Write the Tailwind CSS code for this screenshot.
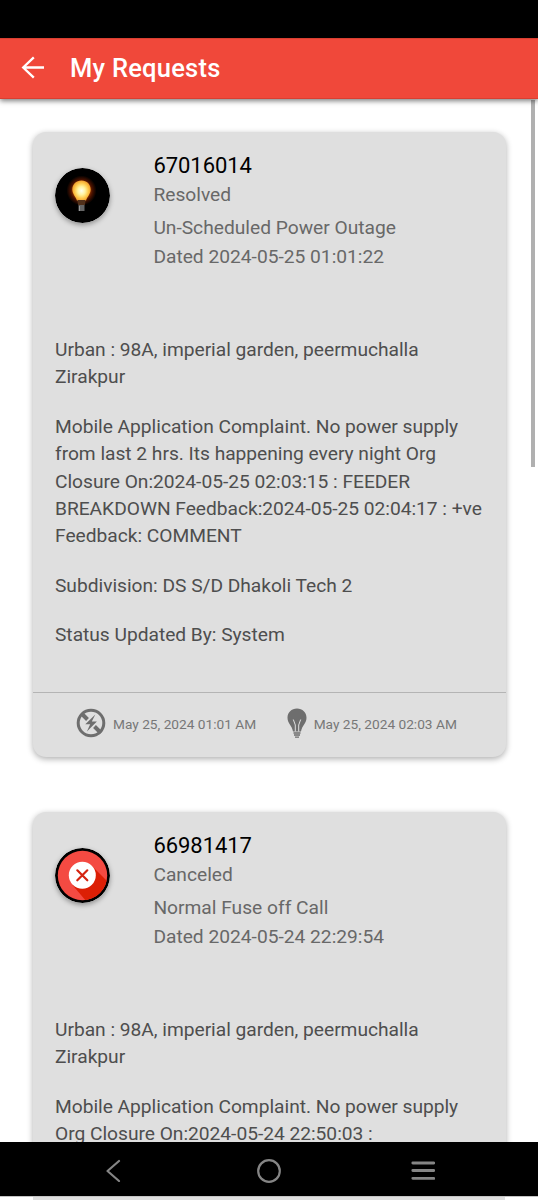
<!DOCTYPE html>
<html lang="en">
<head>
<meta charset="utf-8">
<title>My Requests</title>
<script src="https://cdn.jsdelivr.net/npm/@tailwindcss/browser@4"></script>
</head>
<body class="bg-white">
<div class="relative flex h-[1200px] w-[538px] flex-col overflow-hidden bg-white font-['Roboto','Liberation_Sans',sans-serif]">
  <div class="h-[38px] shrink-0 bg-black"></div>
  <header class="relative z-10 flex h-[61px] shrink-0 items-center border-y border-[#d93f31] bg-[#f0483a] pl-[21px] text-white shadow-[0_2px_5px_rgba(0,0,0,0.5)]">
    <svg class="mb-[2px] h-6 w-6 shrink-0" viewBox="0 0 24 24" fill="none" stroke="currentColor" stroke-width="2.3"><path d="M23 11.500H2.500M12.800 1.300L2.200 11.500l10.600 10.200"/></svg>
    <h1 class="ml-[25px] text-[25.5px] leading-none font-medium tracking-[0.25px]">My Requests</h1>
  </header>

  <main class="flex min-h-0 flex-1 flex-col gap-[54px] overflow-hidden px-8 pt-[33px] text-[19.2px] leading-[27.4px] text-[#4e4e4e]">
    <article class="ml-px flex h-[625px] mb-px w-[473px] shrink-0 flex-col rounded-[13px] bg-[#dfdfdf] shadow-[0_2px_6px_rgba(0,0,0,0.32)]">
      <div class="flex h-[204px] shrink-0 pl-[22px] pt-[18px]">
        <svg class="mt-[18px] h-[55px] w-[55px] shrink-0 rounded-full shadow-[0_2px_5px_rgba(0,0,0,0.35)]" viewBox="0 0 55 55">
          <defs>
            <radialGradient id="halo"><stop offset="0.5" stop-color="#a33c00"/><stop offset="0.72" stop-color="#4a1200"/><stop offset="1" stop-color="#000"/></radialGradient>
            <radialGradient id="bulb"><stop offset="0" stop-color="#fffff0"/><stop offset="0.4" stop-color="#fff3a0"/><stop offset="0.75" stop-color="#ffc84a"/><stop offset="1" stop-color="#f0a030"/></radialGradient>
          </defs>
          <circle cx="27.5" cy="27.5" r="27.5" fill="#000"/>
          <circle cx="26.500" cy="22.500" r="15" fill="url(#halo)"/>
          <path d="M26.500 12.500c-5.300 0-9.200 3.900-9.200 9 0 4.500 3.300 6.700 4.800 11.500h8.800c1.500-4.800 4.800-7 4.800-11.500 0-5.100-3.900-9-9.200-9z" fill="url(#bulb)"/>
          <path d="M22.300 32h8.400l-.8 5h-6.800z" fill="#51301a"/>
          <path d="M23.500 37h6v6h-6z" fill="#666"/><path d="M24.500 38v5" stroke="#999"/>
        </svg>
        <div class="ml-[43.400px]">
          <h2 class="relative top-px text-[22px] leading-[30px] tracking-[-0.05px] text-black">67016014</h2>
          <p class="text-[#686868] leading-[29.600px]">Resolved</p>
          <p class="mt-[3px] text-[#686868] leading-[29.800px]">Un-Scheduled Power Outage</p>
          <p class="text-[#686868] leading-[29.800px]">Dated 2024-05-25 01:01:22</p>
        </div>
      </div>
      <div class="flex flex-1 flex-col gap-[22px] whitespace-nowrap px-[22px] tracking-[-0.02px]">
        <p>Urban : 98A, imperial garden, peermuchalla<br>Zirakpur</p>
        <p>Mobile Application Complaint. No power supply<br>from last 2 hrs. Its happening every night Org<br>Closure On:2024-05-25 02:03:15 : FEEDER<br>BREAKDOWN Feedback:2024-05-25 02:04:17 : +ve<br>Feedback: COMMENT</p>
        <p>Subdivision: DS S/D Dhakoli Tech 2</p>
        <p>Status Updated By: System</p>
      </div>
      <footer class="flex h-[65px] shrink-0 items-center border-t border-[#b4b4b4] pb-[5px] pl-[43px] text-[13.700px] text-[#777]">
        <svg class="h-[30px] w-[30px]" viewBox="0 0 30 30" fill="none" stroke="#6e6e6e">
          <circle cx="15" cy="15" r="12.800" stroke-width="3"/>
          <path d="M6 6l5.500 5.500M18.500 18.500L25 25" stroke-width="4"/>
          <path d="M19.300 6.500l-10 9.800h4.900L10.900 23.500l10-10h-5.100z" fill="#6e6e6e" stroke="none"/>
        </svg>
        <span class="ml-[7px] mt-[4px]">May 25, 2024 01:01 AM</span>
        <svg class="ml-[30.500px] h-[30px] w-5" viewBox="0 0 20 30" fill="none">
          <path d="M10 .5C4.500.5.500 4.500.500 9.700c0 5.600 4.500 7.500 5.500 13.800h8c1-6.300 5.500-8.200 5.500-13.800C19.500 4.500 15.500.5 10 .5z" fill="#6e6e6e"/>
          <path d="M8.300 23.500V17L6.300 11.500M11.700 23.500V17l2-5.500" stroke="#dfdfdf"/>
          <path d="M6.500 25h7M7 27h6M8 29.200h4" stroke="#6e6e6e" stroke-width="1.300"/>
        </svg>
        <span class="ml-[7px] mt-[4px]">May 25, 2024 02:03 AM</span>
      </footer>
    </article>

    <article class="ml-px flex h-[626px] w-[473px] shrink-0 flex-col rounded-[13px] bg-[#dfdfdf] shadow-[0_2px_6px_rgba(0,0,0,0.32)]">
      <div class="flex h-[204px] shrink-0 pl-[22px] pt-[18px]">
        <svg class="mt-[18px] h-[55px] w-[55px] shrink-0 rounded-full shadow-[0_2px_5px_rgba(0,0,0,0.35)]" viewBox="0 0 55 55">
          <defs><clipPath id="disc"><circle cx="27.5" cy="27.5" r="24.700"/></clipPath></defs>
          <circle cx="27.5" cy="27.5" r="27.5" fill="#000"/>
          <circle cx="27.5" cy="27.5" r="24.700" fill="#f44a42"/>
          <path d="M36.500 17.500L60 41v19H37L17.500 37z" fill="#dc1f05" clip-path="url(#disc)"/>
          <circle cx="27.300" cy="27.300" r="13.500" fill="#fff"/>
          <path d="M22.300 22.300l10 10m0-10l-10 10" stroke="#d5230f" stroke-width="2.200" stroke-linecap="round"/>
        </svg>
        <div class="ml-[43.400px]">
          <h2 class="relative top-px text-[22px] leading-[30px] tracking-[-0.05px] text-black">66981417</h2>
          <p class="text-[#686868] leading-[29.600px]">Canceled</p>
          <p class="mt-[3px] text-[#686868] leading-[29.800px]">Normal Fuse off Call</p>
          <p class="text-[#686868] leading-[29.800px]">Dated 2024-05-24 22:29:54</p>
        </div>
      </div>
      <div class="flex flex-1 flex-col gap-[22px] whitespace-nowrap px-[22px] tracking-[-0.02px]">
        <p>Urban : 98A, imperial garden, peermuchalla<br>Zirakpur</p>
        <p>Mobile Application Complaint. No power supply<br>Org Closure On:2024-05-24 22:50:03 :</p>
      </div>
    </article>
  </main>

  <div class="absolute top-[100px] right-[3px] h-[367px] w-[4px] bg-[#b0b0b0]"></div>

  <nav class="z-10 flex h-[54px] shrink-0 items-center bg-black pt-[2px]" aria-label="System navigation">
    <svg class="ml-[105px] h-6 w-4" viewBox="0 0 16 24" fill="none" stroke="#858585" stroke-width="2.200" stroke-linecap="round" stroke-linejoin="round"><path d="M14 3L2.500 13 14 23"/></svg>
    <svg class="ml-[136px] mt-px h-6 w-6" viewBox="0 0 24 24" fill="none" stroke="#858585" stroke-width="2.200"><circle cx="12" cy="12" r="10.800"/></svg>
    <svg class="ml-[130px] h-6 w-6" viewBox="0 0 24 24" fill="none" stroke="#858585" stroke-width="2.800" stroke-linecap="round"><path d="M1.800 5h21M1.800 12.500h21M1.800 20.300h21"/></svg>
  </nav>
  <div class="h-1 shrink-0 border-t border-[#c4c4c4] bg-white px-[33px]"><div class="h-full bg-[#dfdfdf]"></div></div>
</div>
</body>
</html>
